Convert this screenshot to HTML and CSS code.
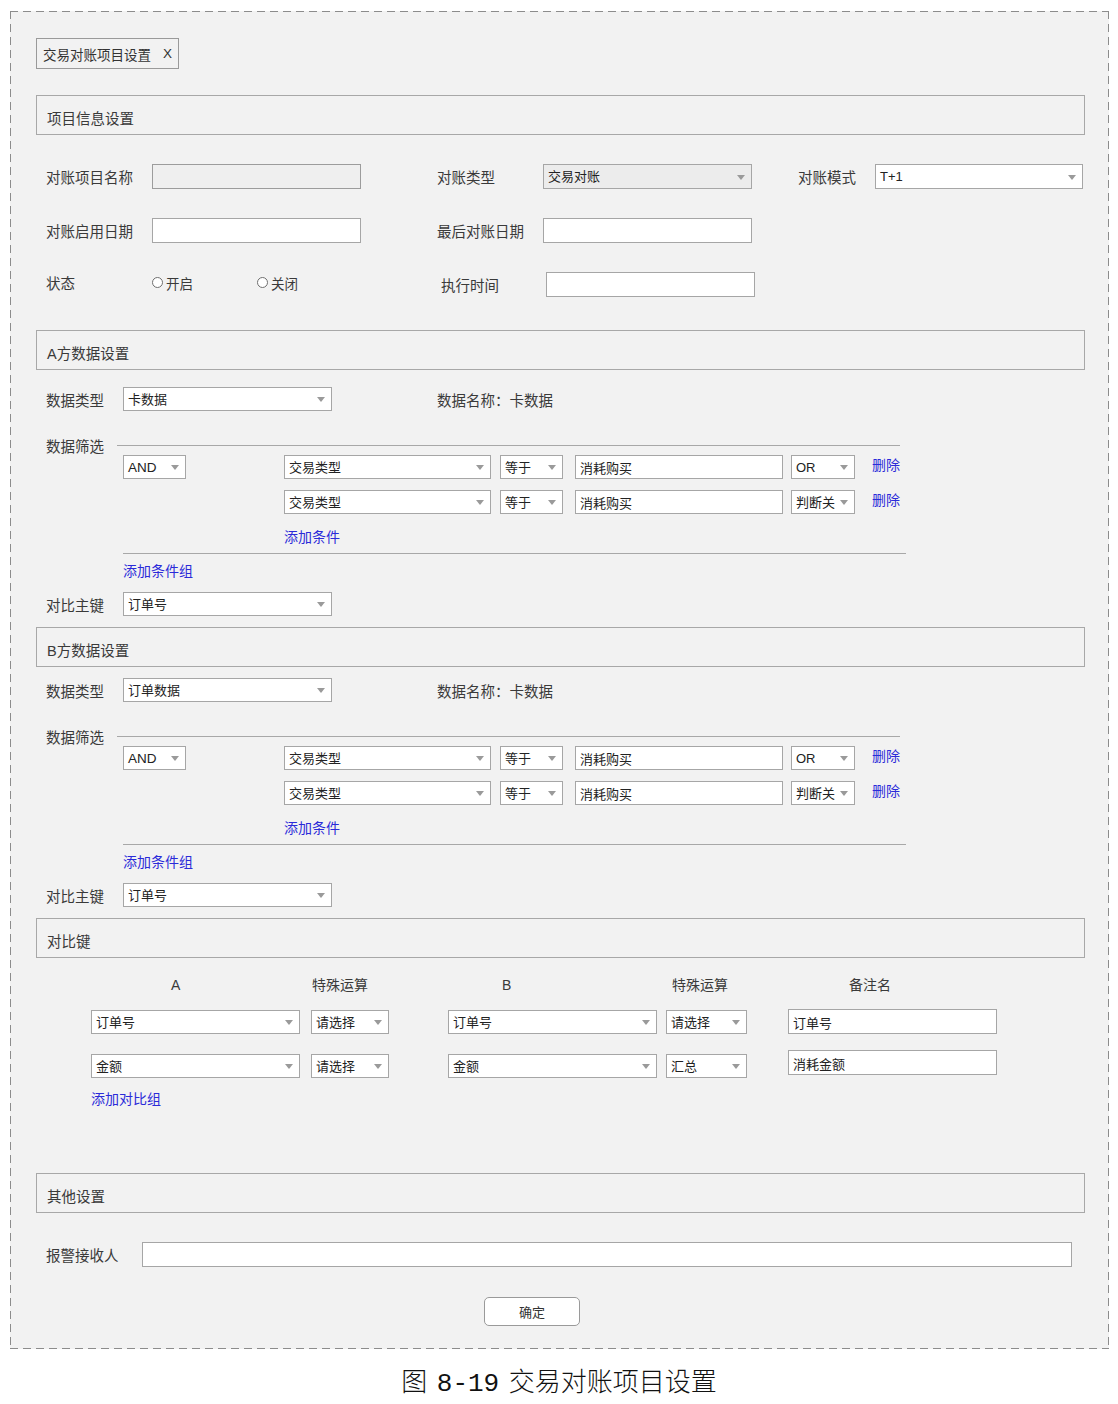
FILE: index.html
```html
<!DOCTYPE html>
<html lang="zh-CN">
<head>
    <meta charset="UTF-8">
    <meta name="viewport" content="width=device-width, initial-scale=1.0">
    <title>交易对账项目设置</title>
    <link rel="stylesheet" href="styles.css">
</head>
<body>

    <div class="frame">
        <div class="tab">交易对账项目设置<span class="tab-close">X</span></div>

        <!-- 项目信息 -->
        <div class="section-title">项目信息设置</div>
        <div class="info-row">
            <span class="label">对账项目名称</span>
            <input type="text" class="field disabled">
            <span></span>
            <span class="label">对账类型</span>
            <div class="select disabled">交易对账</div>
            <span></span>
            <span class="label">对账模式</span>
            <div class="select">T+1</div>
        </div>
        <div class="info-row">
            <span class="label">对账启用日期</span>
            <input type="text" class="field">
            <span></span>
            <span class="label">最后对账日期</span>
            <input type="text" class="field">
        </div>
        <div class="info-row">
            <span class="label up">状态</span>
            <div class="radios">
                <span class="radio"><i></i>开启</span>
                <span class="radio"><i></i>关闭</span>
            </div>
            <span></span>
            <span class="label shift">执行时间</span>
            <input type="text" class="field shift">
        </div>

        <!-- A方 -->
        <div class="section-title gap-33">A方数据设置</div>
        <div class="type-row">
            <span class="label">数据类型</span>
            <div class="select wide">卡数据</div>
            <span class="data-name">数据名称：卡数据</span>
        </div>
        <div class="filter-head">
            <span class="label">数据筛选</span>
            <div class="rule"></div>
        </div>
        <div class="filter-group">
            <div class="select logic">AND</div>
            <div class="cond-list">
                <div class="cond-row">
                    <div class="select cond-field">交易类型</div>
                    <div class="select cond-op">等于</div>
                    <input type="text" class="field cond-value" value="消耗购买">
                    <div class="select cond-logic">OR</div>
                    <a class="link del">删除</a>
                </div>
                <div class="cond-row">
                    <div class="select cond-field">交易类型</div>
                    <div class="select cond-op">等于</div>
                    <input type="text" class="field cond-value" value="消耗购买">
                    <div class="select cond-logic">判断关</div>
                    <a class="link del">删除</a>
                </div>
                <a class="link add-cond">添加条件</a>
            </div>
        </div>
        <a class="link add-group">添加条件组</a>
        <div class="type-row key-row">
            <span class="label">对比主键</span>
            <div class="select wide">订单号</div>
        </div>

        <!-- B方 -->
        <div class="section-title gap-11">B方数据设置</div>
        <div class="type-row tight">
            <span class="label">数据类型</span>
            <div class="select wide">订单数据</div>
            <span class="data-name">数据名称：卡数据</span>
        </div>
        <div class="filter-head">
            <span class="label">数据筛选</span>
            <div class="rule"></div>
        </div>
        <div class="filter-group">
            <div class="select logic">AND</div>
            <div class="cond-list">
                <div class="cond-row">
                    <div class="select cond-field">交易类型</div>
                    <div class="select cond-op">等于</div>
                    <input type="text" class="field cond-value" value="消耗购买">
                    <div class="select cond-logic">OR</div>
                    <a class="link del">删除</a>
                </div>
                <div class="cond-row">
                    <div class="select cond-field">交易类型</div>
                    <div class="select cond-op">等于</div>
                    <input type="text" class="field cond-value" value="消耗购买">
                    <div class="select cond-logic">判断关</div>
                    <a class="link del">删除</a>
                </div>
                <a class="link add-cond">添加条件</a>
            </div>
        </div>
        <a class="link add-group">添加条件组</a>
        <div class="type-row key-row">
            <span class="label">对比主键</span>
            <div class="select wide">订单号</div>
        </div>

        <!-- 对比键 -->
        <div class="section-title gap-11">对比键</div>
        <div class="cmp-head">
            <span class="h-a">A</span>
            <span class="h-op">特殊运算</span>
            <span class="h-b">B</span>
            <span class="h-op2">特殊运算</span>
            <span class="h-note">备注名</span>
        </div>
        <div class="cmp-row">
            <div class="select cmp-a">订单号</div>
            <div class="select cmp-op">请选择</div>
            <div class="select cmp-b">订单号</div>
            <div class="select cmp-op2">请选择</div>
            <input type="text" class="field note" value="订单号">
        </div>
        <div class="cmp-row second">
            <div class="select cmp-a">金额</div>
            <div class="select cmp-op">请选择</div>
            <div class="select cmp-b">金额</div>
            <div class="select cmp-op2">汇总</div>
            <input type="text" class="field note" value="消耗金额">
        </div>
        <a class="link add-cmp">添加对比组</a>

        <!-- 其他 -->
        <div class="section-title gap-66">其他设置</div>
        <div class="alert-row">
            <span class="label">报警接收人</span>
            <input type="text" class="field alert-field">
        </div>
        <button class="ok-btn">确定</button>
    </div>

    <div class="caption">图 8-19 交易对账项目设置</div>

</body>
</html>
```

FILE: styles.css
```css
/* 交易对账项目设置 */
body {
    margin: 0;
    padding: 0;
    background-color: #fff;
    font-family: "Liberation Sans", "Noto Sans CJK SC", sans-serif;
    color: #3a3a3a;
}
.frame {
    box-sizing: border-box;
    width: 1099px;
    height: 1338px;
    margin: 11px 0 0 10px;
    padding: 27px 24px 0 26px;
    background:
        repeating-linear-gradient(90deg, #8c8c8c 0 8px, transparent 8px 13px) top left / 100% 1px no-repeat,
        repeating-linear-gradient(90deg, #8c8c8c 0 8px, transparent 8px 13px) bottom left / 100% 1px no-repeat,
        repeating-linear-gradient(180deg, #8c8c8c 0 8px, transparent 8px 13px) top left / 1px 100% no-repeat,
        repeating-linear-gradient(180deg, #8c8c8c 0 8px, transparent 8px 13px) top right / 1px 100% no-repeat,
        #f2f2f2;
}
.tab {
    display: flex;
    align-items: center;
    box-sizing: border-box;
    width: 143px;
    height: 31px;
    padding: 0 6px;
    border: 1px solid #9a9a9a;
    font-size: 13.5px;
    color: #333;
}
.tab-close {
    margin-left: 12px;
}
.section-title {
    display: flex;
    align-items: center;
    box-sizing: border-box;
    height: 40px;
    margin-top: 26px;
    padding: 5px 0 0 10px;
    border: 1px solid #a8a8a8;
    font-size: 14.5px;
}
.gap-33 { margin-top: 33px; }
.gap-11 { margin-top: 11px; }
.gap-66 { margin-top: 66px; }

.label {
    font-size: 14.5px;
    white-space: nowrap;
}
.field {
    box-sizing: border-box;
    height: 25px;
    margin: 0;
    padding: 1px 4px 0;
    border: 1px solid #a6a6a6;
    background-color: #fff;
    font-family: inherit;
    font-size: 13px;
    color: #222;
    outline: none;
}
.field.disabled {
    background-color: #efefef;
    border-color: #9c9c9c;
}
.select {
    position: relative;
    box-sizing: border-box;
    height: 24px;
    padding: 1px 0 0 4px;
    border: 1px solid #a6a6a6;
    background-color: #fff;
    font-size: 13px;
    line-height: 21px;
    color: #222;
    white-space: nowrap;
    overflow: hidden;
}
.select.disabled {
    background-color: #ececec;
}
.select::after {
    content: "";
    position: absolute;
    right: 6px;
    top: 50%;
    margin-top: -2px;
    border-left: 4px solid transparent;
    border-right: 4px solid transparent;
    border-top: 5px solid #9a9a9a;
}
.link {
    color: #2b2bd9;
    font-size: 14px;
    line-height: 16px;
    cursor: pointer;
}

/* 项目信息 */
.info-row {
    display: grid;
    grid-template-columns: 106px 209px 76px 106px 209px 46px 77px 208px;
    align-items: center;
    height: 25px;
    margin-top: 29px;
    padding-left: 10px;
}
.info-row .field {
    width: 209px;
}
.info-row .select {
    height: 25px;
}
.info-row .shift {
    margin-left: 4px;
}
.info-row .field.shift {
    margin-left: 3px;
}
.label.up {
    margin-top: -4px;
}
.radios {
    display: flex;
    gap: 64px;
    margin-top: -4px;
}
.radio {
    display: flex;
    align-items: center;
    font-size: 13.5px;
}
.radio i {
    display: inline-block;
    box-sizing: border-box;
    width: 11px;
    height: 11px;
    margin-right: 3px;
    border: 1px solid #6f6f6f;
    border-radius: 50%;
    background-color: #fff;
}

/* 数据设置 */
.type-row {
    display: flex;
    align-items: center;
    height: 24px;
    margin-top: 17px;
    padding-left: 10px;
}
.type-row.tight {
    margin-top: 11px;
}
.type-row.key-row {
    margin-top: 13px;
}
.type-row .label {
    width: 77px;
}
.select.wide {
    width: 209px;
}
.data-name {
    margin-left: 105px;
    font-size: 14.5px;
}
.filter-head {
    display: flex;
    align-items: center;
    height: 16px;
    margin-top: 26px;
    padding-left: 10px;
}
.filter-head .label {
    width: 71px;
}
.rule {
    width: 783px;
    border-top: 1px solid #a8a8a8;
}
.filter-group {
    display: flex;
    align-items: flex-start;
    width: 783px;
    margin: 2px 0 0 87px;
    padding-bottom: 8px;
    border-bottom: 1px solid #a8a8a8;
}
.select.logic {
    width: 63px;
    font-size: 13.5px;
}
.cond-list {
    display: flex;
    flex-direction: column;
    align-items: flex-start;
    margin-left: 98px;
}
.cond-row {
    display: flex;
    align-items: center;
    height: 24px;
}
.cond-row + .cond-row {
    margin-top: 11px;
}
.cond-field {
    width: 207px;
}
.cond-op {
    width: 63px;
    margin-left: 9px;
}
.field.cond-value {
    width: 208px;
    height: 24px;
    margin-left: 12px;
}
.cond-logic {
    width: 64px;
    margin-left: 8px;
}
.del {
    margin: -5px 0 0 17px;
}
.add-cond {
    margin-top: 15px;
}
.add-group {
    display: block;
    margin: 9px 0 0 87px;
}

/* 对比键 */
.cmp-head {
    display: flex;
    margin: 19px 0 0 55px;
    font-size: 14px;
    line-height: 16px;
}
.cmp-head span {
    box-sizing: border-box;
}
.h-a { width: 209px; padding-left: 80px; }
.h-op { width: 78px; margin-left: 11px; padding-left: 1px; }
.h-b { width: 209px; margin-left: 59px; padding-left: 54px; }
.h-op2 { width: 81px; margin-left: 9px; padding-left: 6px; }
.h-note { margin-left: 41px; padding-left: 61px; }
.cmp-row {
    display: flex;
    align-items: center;
    margin: 17px 0 0 55px;
}
.cmp-row.second {
    margin-top: 20px;
}
.cmp-a { width: 209px; }
.cmp-op { width: 78px; margin-left: 11px; }
.cmp-b { width: 209px; margin-left: 59px; }
.cmp-op2 { width: 81px; margin-left: 9px; }
.field.note {
    width: 209px;
    margin: -1px 0 0 41px;
}
.cmp-row.second .field.note {
    margin-top: -7px;
}
.add-cmp {
    display: block;
    margin: 13px 0 0 55px;
}

/* 其他设置 */
.alert-row {
    display: flex;
    align-items: center;
    margin-top: 29px;
    padding-left: 10px;
}
.alert-row .label {
    width: 96px;
}
.alert-field {
    width: 930px;
}
.ok-btn {
    display: block;
    box-sizing: border-box;
    width: 96px;
    height: 29px;
    margin: 30px 0 0 448px;
    border: 1px solid #9a9a9a;
    border-radius: 5px;
    background-color: #fff;
    font-family: inherit;
    font-size: 13px;
    color: #333;
    cursor: pointer;
}
.caption {
    margin-top: 17px;
    text-align: center;
    font-family: "Liberation Mono", "Noto Sans CJK SC", monospace;
    font-size: 26px;
    font-weight: 300;
    line-height: 36px;
    word-spacing: -6px;
    color: #111;
}
```
